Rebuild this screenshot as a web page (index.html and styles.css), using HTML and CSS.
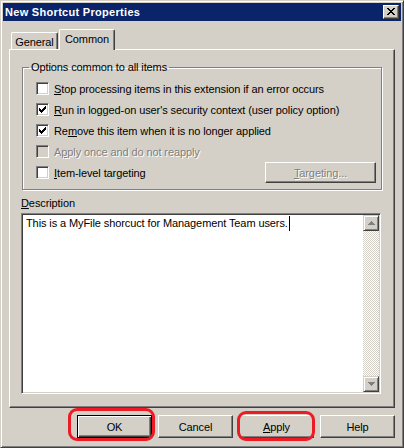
FILE: index.html
```html
<!DOCTYPE html>
<html lang="en">
<head>
    <meta charset="UTF-8">
    <title>New Shortcut Properties</title>
    <link rel="stylesheet" href="styles.css">
</head>
<body>
    <div class="window">
        <div class="titlebar">
            <span class="title">New Shortcut Properties</span>
            <div class="close-btn">
                <svg width="8" height="7" viewBox="0 0 8 7" shape-rendering="crispEdges">
                    <path d="M0 0h2v1H0z M6 0h2v1H6z M1 1h2v1H1z M5 1h2v1H5z M2 2h4v1H2z M3 3h2v1H3z M2 4h4v1H2z M1 5h2v1H1z M5 5h2v1H5z M0 6h2v1H0z M6 6h2v1H6z" fill="#000"/>
                </svg>
            </div>
        </div>

        <div class="tabs">
            <div class="tab">General</div>
            <div class="tab active">Common</div>
        </div>

        <div class="panel">
            <fieldset class="group">
                <legend>Options common to all items</legend>
                <div class="option">
                    <span class="check"></span>
                    <span><u>S</u>top processing items in this extension if an error occurs</span>
                </div>
                <div class="option">
                    <span class="check checked">
                        <svg width="7" height="7" viewBox="0 0 7 7" shape-rendering="crispEdges"><path d="M0 2h1v3H0z M1 3h1v3H1z M2 4h1v3H2z M3 3h1v3H3z M4 2h1v3H4z M5 1h1v3H5z M6 0h1v3H6z" fill="#000"/></svg>
                    </span>
                    <span><u>R</u>un in logged-on user's security context (user policy option)</span>
                </div>
                <div class="option">
                    <span class="check checked">
                        <svg width="7" height="7" viewBox="0 0 7 7" shape-rendering="crispEdges"><path d="M0 2h1v3H0z M1 3h1v3H1z M2 4h1v3H2z M3 3h1v3H3z M4 2h1v3H4z M5 1h1v3H5z M6 0h1v3H6z" fill="#000"/></svg>
                    </span>
                    <span>Re<u>m</u>ove this item when it is no longer applied</span>
                </div>
                <div class="option disabled">
                    <span class="check"></span>
                    <span>A<u>p</u>ply once and do not reapply</span>
                </div>
                <div class="option">
                    <span class="check"></span>
                    <span><u>I</u>tem-level targeting</span>
                    <div class="btn targeting disabled"><span><u>T</u>argeting...</span></div>
                </div>
            </fieldset>

            <div class="desc-label"><u>D</u>escription</div>
            <div class="desc-box">
                <div class="desc-text">This is a MyFile shorcuct for Management Team users.<span class="caret"></span></div>
                <div class="scrollbar">
                    <div class="sb-btn">
                        <svg width="7" height="4" viewBox="0 0 7 4" shape-rendering="crispEdges"><path d="M3 0h1v1H3z M2 1h3v1H2z M1 2h5v1H1z M0 3h7v1H0z" fill="#808080"/></svg>
                    </div>
                    <div class="sb-track"></div>
                    <div class="sb-btn">
                        <svg width="7" height="4" viewBox="0 0 7 4" shape-rendering="crispEdges"><path d="M0 0h7v1H0z M1 1h5v1H1z M2 2h3v1H2z M3 3h1v1H3z" fill="#808080"/></svg>
                    </div>
                </div>
            </div>
        </div>

        <div class="actions">
            <div class="btn default">OK<span class="marker marker-ok"></span></div>
            <div class="btn">Cancel</div>
            <div class="btn"><span><u>A</u>pply</span><span class="marker marker-apply"></span></div>
            <div class="btn">Help</div>
        </div>
    </div>
</body>
</html>
```

FILE: styles.css
```css
body {
    margin: 0;
    font-family: "Liberation Sans", Arial, sans-serif;
    font-size: 11px;
    letter-spacing: -0.1px;
    color: #000;
    background-color: #d4d0c8;
}

u {
    text-decoration: underline;
    text-underline-offset: 1px;
}

.window {
    width: 404px;
    height: 448px;
    box-sizing: border-box;
    border: 1px solid;
    border-color: #d4d0c8 #404040 #404040 #d4d0c8;
    box-shadow: inset 1px 1px #fff, inset -1px -1px #808080;
    padding: 2px;
    display: flex;
    flex-direction: column;
    background-color: #d4d0c8;
}

/* title bar */
.titlebar {
    height: 18px;
    flex: none;
    background-color: #0a246a;
    display: flex;
    align-items: center;
    justify-content: space-between;
    padding: 0 2px 0 2px;
}

.title {
    color: #fff;
    font-weight: bold;
    font-size: 11px;
    letter-spacing: 0.3px;
}

.close-btn {
    width: 16px;
    height: 14px;
    box-sizing: border-box;
    background-color: #d4d0c8;
    border: 1px solid;
    border-color: #fff #404040 #404040 #fff;
    box-shadow: inset -1px -1px #808080;
    display: flex;
    align-items: center;
    justify-content: center;
}

.close-btn svg {
    display: block;
    margin: 0 0 1px 0;
}

/* tabs */
.tabs {
    height: 28px;
    flex: none;
    display: flex;
    align-items: flex-end;
    padding-left: 8px;
}

.tab {
    box-sizing: border-box;
    width: 47px;
    height: 17px;
    border: 1px solid;
    border-bottom: none;
    border-color: #fff #404040 #404040 #fff;
    border-radius: 2px 2px 0 0;
    box-shadow: inset -1px 0 #808080;
    display: flex;
    align-items: center;
    justify-content: center;
    padding-top: 1px;
}

.tab.active {
    width: 56px;
    height: 21px;
    margin-left: 1px;
    margin-bottom: -1px;
    padding-bottom: 3px;
    position: relative;
    z-index: 1;
    background-color: #d4d0c8;
}

/* tab page */
.panel {
    flex: 1;
    display: flex;
    flex-direction: column;
    margin: 0 6px;
    border: 1px solid;
    border-color: #fff #404040 #404040 #fff;
    box-shadow: inset -1px -1px #808080;
    padding: 0 12px 13px 11px;
}

.group {
    margin: 11px 0 0 1px;
    padding: 4px 5px 6px 13px;
    border: 1px solid #808080;
    box-shadow: inset 1px 1px #fff, 1px 1px #fff;
    min-width: 0;
}

.group legend {
    margin-left: -7px;
    padding: 0 2px;
    line-height: 13px;
}

.option {
    height: 21px;
    display: flex;
    align-items: center;
}

.check {
    width: 13px;
    height: 13px;
    box-sizing: border-box;
    flex: none;
    margin-right: 5px;
    background-color: #fff;
    border: 1px solid;
    border-color: #808080 #fff #fff #808080;
    box-shadow: inset 1px 1px #404040, inset -1px -1px #d4d0c8;
}

.check svg {
    display: block;
    margin: 2px;
}

.option.disabled {
    color: #808080;
    text-shadow: 1px 1px #fff;
}

.option.disabled .check {
    background-color: #d4d0c8;
}

/* buttons */
.btn {
    width: 75px;
    height: 23px;
    box-sizing: border-box;
    border: 1px solid;
    border-color: #fff #404040 #404040 #fff;
    box-shadow: inset -1px -1px #808080;
    display: flex;
    align-items: center;
    justify-content: center;
    position: relative;
}

.btn.default {
    border-color: #000;
    box-shadow: inset 1px 1px #fff, inset -1px -1px #404040, inset -2px -2px #808080;
}

.btn.targeting {
    width: 111px;
    height: 21px;
    margin-left: auto;
}

.btn.disabled {
    color: #808080;
    text-shadow: 1px 1px #fff;
}

/* description */
.desc-label {
    margin-top: 7px;
    line-height: 13px;
}

.desc-box {
    flex: 1;
    margin: 3px 1px 0 0;
    display: flex;
    background-color: #fff;
    border: 1px solid;
    border-color: #808080 #fff #fff #808080;
    box-shadow: inset 1px 1px #404040, inset -1px -1px #d4d0c8;
    padding: 1px;
}

.desc-text {
    flex: 1;
    padding: 1px 3px;
    line-height: 14px;
}

.caret {
    display: inline-block;
    width: 1px;
    height: 15px;
    margin-left: 1px;
    background-color: #000;
    vertical-align: -4px;
}

.scrollbar {
    width: 16px;
    display: flex;
    flex-direction: column;
}

.sb-btn {
    height: 16px;
    box-sizing: border-box;
    background-color: #d4d0c8;
    border: 1px solid;
    border-color: #d4d0c8 #404040 #404040 #d4d0c8;
    box-shadow: inset 1px 1px #fff, inset -1px -1px #808080;
    display: flex;
    align-items: center;
    justify-content: center;
}

.sb-track {
    flex: 1;
    background: repeating-conic-gradient(#fff 0 25%, #d4d0c8 0 50%) 0 0 / 2px 2px;
}

/* dialog buttons */
.actions {
    flex: none;
    display: flex;
    justify-content: flex-end;
    gap: 6px;
    margin: 7px 0;
    padding-right: 6px;
}

/* red annotation marks */
.marker {
    position: absolute;
    border: 3px solid #ed1c24;
    border-radius: 9px;
    box-sizing: border-box;
}

.marker-ok {
    left: -10px;
    top: -8px;
    width: 87px;
    height: 33px;
}

.marker-apply {
    left: -3px;
    top: -5px;
    width: 78px;
    height: 30px;
}
```
